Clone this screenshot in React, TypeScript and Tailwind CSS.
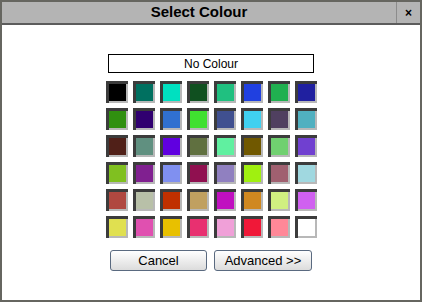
import React from "react"

// palette rows, as shown in the picker
const palette: string[][] = [
  ["#000000", "#007060", "#00e0c0", "#105020", "#20c080", "#2040e0", "#20b050", "#2020a0"],
  ["#309010", "#300070", "#3070d0", "#40e030", "#405090", "#40d0f0", "#504060", "#50b0c0"],
  ["#502018", "#609080", "#6000e0", "#607040", "#60f0a0", "#705800", "#70d070", "#7040d0"],
  ["#80c020", "#802090", "#8090f0", "#901050", "#9080c0", "#a0f010", "#a06070", "#a0d8e0"],
  ["#b04840", "#b8c0a8", "#c03000", "#c0a060", "#c010c0", "#d08820", "#d0f080", "#d060f0"],
  ["#e0e050", "#e050b0", "#e8c000", "#e83070", "#f0a0d8", "#f01838", "#ff8898", "#ffffff"],
]

function Swatch({ color }: { color: string }) {
  return (
    <div className="w-[22px] h-[22px] border-t-[3px] border-l-[3px] border-t-[#3c3c3c] border-l-[#3c3c3c] bg-white">
      <div className="w-full h-full border-r-2 border-b-2 border-[#b8b8b8]" style={{ backgroundColor: color }} />
    </div>
  )
}

export default function App() {
  return (
    <div className="w-[422px] h-[302px] bg-white font-['Liberation_Sans',Arial,sans-serif] border-2 border-[#666660] flex flex-col">
      {/* Title bar */}
      <div className="h-[23px] flex bg-[#b4b4b4] border-b-2 border-[#5c5c5c]">
        <div className="flex-1 flex items-center justify-center text-[15px] font-bold text-black">
          Select Colour
        </div>
        <div className="w-[24px] border-l border-[#8c8c8c] flex items-center justify-center text-[12px] font-bold text-black">
          ×
        </div>
      </div>

      {/* Body */}
      <div className="flex-1 flex flex-col items-center pt-[29px]">
        <div className="w-[206px] h-[19px] border border-black flex items-center justify-center text-[12px] text-black">
          No Colour
        </div>

        <div className="mt-[8px] flex flex-col gap-[5px]">
          {palette.map((row, i) => (
            <div key={i} className="flex gap-[5px]">
              {row.map((c) => (
                <Swatch key={c} color={c} />
              ))}
            </div>
          ))}
        </div>

        <div className="mt-[12px] flex gap-[7px]">
          <button className="w-[97px] h-[21px] rounded-[3px] border border-[#5a6a80] bg-gradient-to-b from-white to-[#dcdcdc] text-[13px] text-black leading-none">
            Cancel
          </button>
          <button className="w-[98px] h-[21px] rounded-[3px] border border-[#5a6a80] bg-gradient-to-b from-white to-[#dcdcdc] text-[13px] text-black leading-none">
            Advanced &gt;&gt;
          </button>
        </div>
      </div>
    </div>
  )
}
